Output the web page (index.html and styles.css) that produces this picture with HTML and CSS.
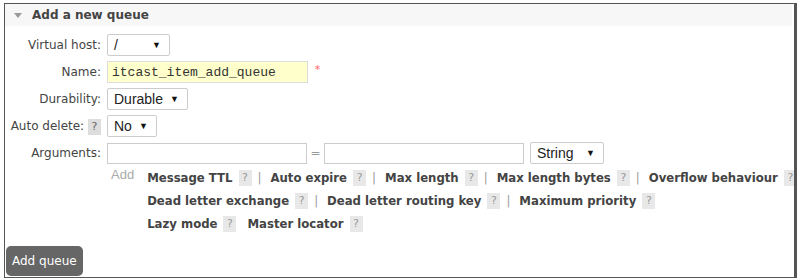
FILE: index.html
```html
<!DOCTYPE html>
<html lang="en">
<head>
    <meta charset="UTF-8">
    <title>Add a new queue</title>
    <link rel="stylesheet" href="styles.css">
</head>
<body>
    <div class="section">
        <h2 class="section-title"><span class="arrow"></span>Add a new queue</h2>
        <form class="queue-form">
            <table class="form">
                <tr>
                    <th><label>Virtual host:</label></th>
                    <td>
                        <div class="select w-vhost"><span>/</span><span class="caret">&#9660;</span></div>
                    </td>
                </tr>
                <tr>
                    <th><label>Name:</label></th>
                    <td>
                        <input class="text name" type="text" value="itcast_item_add_queue">
                        <span class="mand">*</span>
                    </td>
                </tr>
                <tr>
                    <th><label>Durability:</label></th>
                    <td>
                        <div class="select w-durable"><span>Durable</span><span class="caret">&#9660;</span></div>
                    </td>
                </tr>
                <tr>
                    <th><label>Auto delete: <span class="help">?</span></label></th>
                    <td>
                        <div class="select w-no"><span>No</span><span class="caret">&#9660;</span></div>
                    </td>
                </tr>
                <tr>
                    <th><label>Arguments:</label></th>
                    <td>
                        <div class="args">
                            <input class="text arg" type="text">
                            <span class="eq">=</span>
                            <input class="text arg" type="text">
                            <div class="select w-string"><span>String</span><span class="caret">&#9660;</span></div>
                        </div>
                        <div class="shortcuts">
                            <span class="add">Add</span>
                            <div class="links">
                                <div class="line">
                                    <a>Message TTL</a><span class="help">?</span><span class="sep">|</span>
                                    <a>Auto expire</a><span class="help">?</span><span class="sep">|</span>
                                    <a>Max length</a><span class="help">?</span><span class="sep">|</span>
                                    <a>Max length bytes</a><span class="help">?</span><span class="sep">|</span>
                                    <a>Overflow behaviour</a><span class="help">?</span>
                                </div>
                                <div class="line">
                                    <a>Dead letter exchange</a><span class="help">?</span><span class="sep">|</span>
                                    <a>Dead letter routing key</a><span class="help">?</span><span class="sep">|</span>
                                    <a>Maximum priority</a><span class="help">?</span>
                                </div>
                                <div class="line">
                                    <a>Lazy mode</a><span class="help">?</span>
                                    <a>Master locator</a><span class="help">?</span>
                                </div>
                            </div>
                        </div>
                    </td>
                </tr>
            </table>
            <button type="button" class="submit">Add queue</button>
        </form>
    </div>
</body>
</html>
```

FILE: styles.css
```css
html {
    background-color: #e4e4e4;
}
body {
    margin: 0;
    padding: 3px 3px 2px 4px;
    background-color: white;
    color: #444;
    font-family: "DejaVu Sans", Verdana, sans-serif;
    font-size: 12px;
}
.section {
    border: 1px solid #555;
    border-right-width: 3px;
    height: 275px;
    box-sizing: border-box;
    display: flex;
    flex-direction: column;
    overflow: hidden;
}
.section-title {
    margin: 0 2px 0 0;
    height: 22px;
    flex-shrink: 0;
    background-color: #f7f7f7;
    font-size: 12px;
    font-weight: bold;
    color: #444;
    display: flex;
    align-items: center;
    padding-left: 9px;
}
.arrow {
    width: 0;
    height: 0;
    border-left: 4px solid transparent;
    border-right: 4px solid transparent;
    border-top: 5px solid #999;
    margin-right: 10px;
}
.queue-form {
    flex: 1;
    display: flex;
    flex-direction: column;
    justify-content: space-between;
}
.form {
    border-collapse: collapse;
    margin-top: 8px;
}
.form th {
    font-weight: normal;
    text-align: right;
    vertical-align: top;
    white-space: nowrap;
    padding: 4px 6px 0 0;
    height: 27px;
    box-sizing: border-box;
}
.form td {
    padding: 0 0 5px 0;
    vertical-align: top;
}
.form tr:first-child th label {
    padding-left: 23px;
}
.select {
    display: inline-flex;
    justify-content: space-between;
    align-items: center;
    height: 22px;
    box-sizing: border-box;
    border: 1px solid #ccc;
    border-radius: 2px;
    background-color: white;
    padding: 0 8px 0 6px;
    font-family: "Liberation Sans", Arial, sans-serif;
    font-size: 14px;
    color: #222;
}
.caret {
    font-size: 9px;
    color: #111;
}
.w-vhost { width: 63px; }
.w-durable { width: 81px; }
.w-no { width: 50px; }
.w-string { width: 74px; margin-left: 6px; }
.text {
    height: 22px;
    box-sizing: border-box;
    border: 1px solid #ccc;
    padding: 0 4px;
    margin: 0;
    font-family: "Liberation Mono", "Courier New", monospace;
    font-size: 13px;
    color: #333;
    vertical-align: top;
}
.name {
    width: 201px;
    background-color: #ffffcc;
    border-color: #ddd;
}
.mand {
    color: #f66;
    font-size: 11px;
    margin-left: 3px;
    vertical-align: top;
    position: relative;
    top: 2px;
}
.args {
    display: flex;
    align-items: center;
    height: 22px;
}
.arg {
    width: 200px;
    height: 21px;
}
.eq {
    width: 17px;
    text-align: center;
    color: #999;
}
.shortcuts {
    display: flex;
    margin-top: 2px;
}
.add {
    color: #aaa;
    padding: 0 13px 0 4px;
    font-family: "Liberation Sans", Arial, sans-serif;
    font-size: 13px;
    line-height: 18px;
}
.links {
    font-size: 11.7px;
}
.links .line {
    display: flex;
    align-items: center;
    white-space: nowrap;
    height: 23px;
}
.links a {
    font-weight: bold;
    color: #444;
}
.help {
    display: inline-block;
    flex-shrink: 0;
    background-color: #e8e8e8;
    color: #999;
    width: 13px;
    height: 16px;
    line-height: 16px;
    text-align: center;
    font-size: 11px;
    margin: 0 6px 0 6px;
}
.line .help + a {
    margin-left: 5px;
}
th .help {
    margin: 0;
    background-color: #ddd;
    color: #666;
}
.sep {
    color: #999;
    margin-right: 9px;
}
.submit {
    align-self: flex-start;
    margin: 0 0 1px 1px;
    background-color: #666;
    color: white;
    border: none;
    border-radius: 5px;
    height: 30px;
    padding: 0 6px;
    font-family: "DejaVu Sans", Verdana, sans-serif;
    font-size: 12px;
}
```
